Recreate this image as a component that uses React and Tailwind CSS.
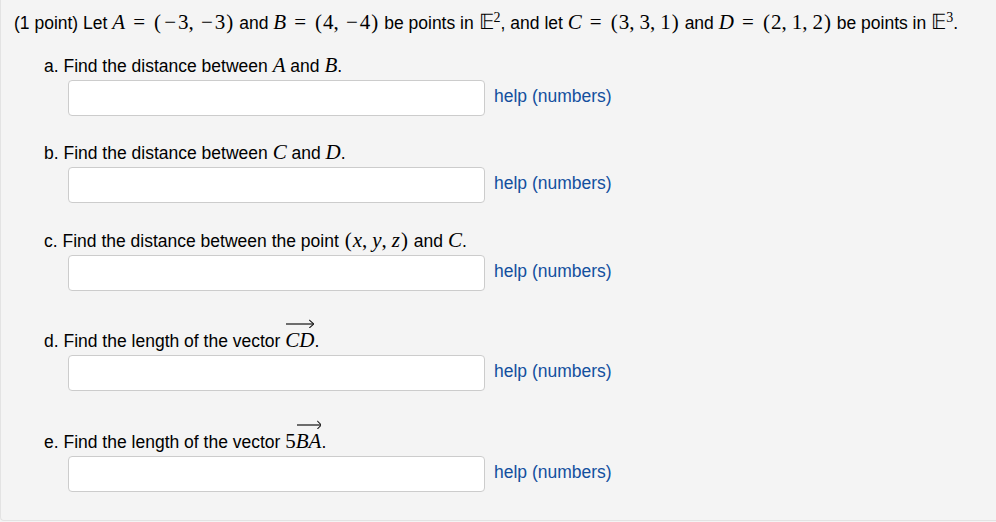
import React from 'react'

// math-ish spans, spaced to mimic MathJax output
const M = ({ children }) => (
  <span className="font-['Liberation_Serif',serif] text-[21px] leading-[0]">{children}</span>
)

const I = ({ children }) => <i className="italic">{children}</i>
const Eq = () => <span className="inline-block w-[16px] mx-[6px] text-center">=</span>
const Minus = () => <span className="inline-block w-[16px] text-center">−</span>
const Comma = () => <span className="mr-[5px]">,</span>
const P = ({ children }) => <span className="px-[1px]">{children}</span>

const Vec = ({ children }) => (
  <span className="relative inline-block pt-[12px] leading-[20px]">
    <svg className="absolute left-[1px] top-[1px] w-[calc(100%-1px)] h-[9px]" viewBox="0 0 40 9" preserveAspectRatio="none">
      <line x1="0" y1="5" x2="39" y2="5" stroke="#111" strokeWidth="1.2" />
      <path d="M33 1 L39.5 5 L33 9" fill="none" stroke="#111" strokeWidth="1.2" />
    </svg>
    {children}
  </span>
)

const Part = ({ label, mt }) => (
  <div className={mt}>
    <div className="ml-[30px] leading-[20px]">{label}</div>
    <div className="flex items-center mt-[4px] ml-[54px]">
      <input className="w-[417px] h-[36px] bg-white border border-[#cccccc] rounded-[4px] outline-none px-2" />
      <a className="ml-[9px] -mt-[3px] text-[#134f9e] cursor-pointer">help (numbers)</a>
    </div>
  </div>
)

export default function App() {
  return (
    <div className="w-[996px] h-[522px] bg-[#f4f4f4] font-['Liberation_Sans',Arial,sans-serif] text-[17.5px] text-black">
      <div className="h-[521px] border-l border-b border-[#e3e3e3] rounded-bl-[4px] pl-[13px] pt-[13px]">
        <div className="leading-[20px] h-[20px] whitespace-nowrap">
          (1 point) Let <M><I>A</I><Eq /><P>(</P><Minus />3<Comma /><Minus />3<P>)</P></M> and{' '}
          <M><I>B</I><Eq /><P>(</P>4<Comma /><Minus />4<P>)</P></M> be points in{' '}
          <M>𝔼<sup className="text-[14px]">2</sup></M>, and let{' '}
          <M><I>C</I><Eq /><P>(</P>3<Comma />3<Comma />1<P>)</P></M> and{' '}
          <M><I>D</I><Eq /><P>(</P>2<Comma />1<Comma />2<P>)</P></M> be points in{' '}
          <M>𝔼<sup className="text-[14px]">3</sup></M>.
        </div>
        <Part
          mt="mt-[23px]"
          label={<>a. Find the distance between <M><I>A</I></M> and <M><I>B</I></M>.</>}
        />
        <Part
          mt="mt-[27px]"
          label={<>b. Find the distance between <M><I>C</I></M> and <M><I>D</I></M>.</>}
        />
        <Part
          mt="mt-[28px]"
          label={<>c. Find the distance between the point <M><P>(</P><I>x</I><Comma /><I>y</I><Comma /><I>z</I><P>)</P></M> and <M><I>C</I></M>.</>}
        />
        <Part
          mt="mt-[27px]"
          label={<>d. Find the length of the vector <M><Vec><I>CD</I></Vec></M>.</>}
        />
        <Part
          mt="mt-[28px]"
          label={<>e. Find the length of the vector <M>5<Vec><I>BA</I></Vec></M>.</>}
        />
      </div>
    </div>
  )
}
